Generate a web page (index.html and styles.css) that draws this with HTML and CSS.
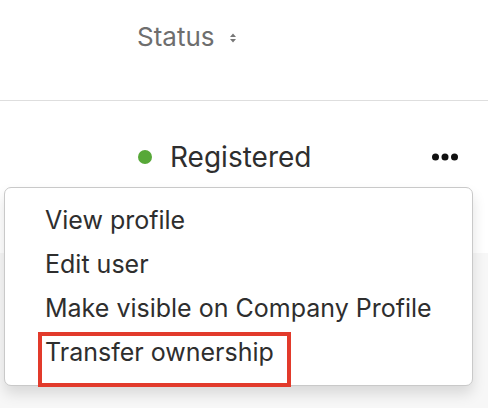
FILE: index.html
```html
<!DOCTYPE html>
<html lang="en">
<head>
    <meta charset="UTF-8">
    <meta name="viewport" content="width=device-width, initial-scale=1.0">
    <title>Users</title>
    <link rel="stylesheet" href="styles.css">
</head>
<body>
    <div class="users-table">
        <div class="head-row">
            <div class="head-cell">
                Status
                <svg class="sort-icon" width="8" height="10" viewBox="0 0 8 10">
                    <path d="M4 0.5 L7 4 H1 Z M4 9.5 L7 6 H1 Z" fill="#777"/>
                </svg>
            </div>
        </div>

        <div class="row">
            <div class="status-cell">
                <span class="dot"></span>
                <span>Registered</span>
            </div>
            <button class="more-btn" aria-label="More actions">
                <svg width="26" height="8" viewBox="0 0 26 8">
                    <circle cx="3.5" cy="4" r="3.5" fill="#111"/>
                    <circle cx="13" cy="4" r="3.5" fill="#111"/>
                    <circle cx="22.5" cy="4" r="3.5" fill="#111"/>
                </svg>
            </button>

            <ul class="menu">
                <li>View profile</li>
                <li>Edit user</li>
                <li>Make visible on Company Profile</li>
                <li class="highlight">Transfer ownership</li>
            </ul>
        </div>

        <div class="row row-alt"></div>
    </div>
</body>
</html>
```

FILE: styles.css
```css
* {
    margin: 0;
    padding: 0;
    box-sizing: border-box;
}
body {
    font-family: Inter, "Liberation Sans", Arial, sans-serif;
    background-color: #fff;
    color: #2e2e2e;
    overflow: hidden;
}
.users-table {
    width: 488px;
}
.head-row {
    height: 101px;
    border-bottom: 1px solid #dedede;
    padding: 21px 0 0 137px;
}
.head-cell {
    display: flex;
    align-items: center;
    gap: 14px;
    font-size: 26px;
    line-height: 32px;
    color: #6e6e6e;
}
.sort-icon {
    margin-top: 2px;
}
.row {
    position: relative;
    height: 152px;
    padding: 39px 30px 0 138px;
    display: flex;
    align-items: flex-start;
    justify-content: space-between;
}
.row-alt {
    height: 160px;
    background-color: #f7f7f7;
}
.status-cell {
    display: flex;
    align-items: center;
    gap: 18px;
    font-size: 28px;
    line-height: 34px;
    color: #2e2e2e;
}
.dot {
    width: 14px;
    height: 14px;
    border-radius: 50%;
    background-color: #57a838;
}
.more-btn {
    border: none;
    background: none;
    height: 34px;
    display: flex;
    align-items: center;
}
.menu {
    position: absolute;
    top: 86px;
    left: 4px;
    width: 469px;
    list-style: none;
    background: #fff;
    border: 1px solid #c9c9c9;
    border-radius: 7px;
    padding: 10px 0 11px 0;
    box-shadow: 0 8px 14px rgba(0, 0, 0, 0.12);
    z-index: 2;
}
.menu li {
    position: relative;
    height: 44px;
    line-height: 44px;
    padding-left: 40px;
    font-size: 25px;
    color: #2e2e2e;
}
.menu li.highlight::after {
    content: "";
    position: absolute;
    left: 33px;
    top: 2px;
    width: 245px;
    height: 47px;
    border: 4px solid #e23a2b;
}
```
